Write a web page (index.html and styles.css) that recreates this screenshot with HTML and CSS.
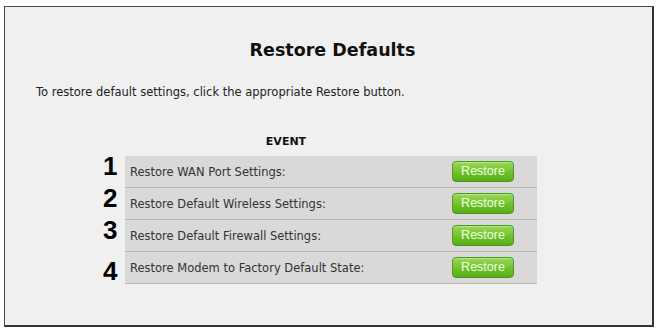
FILE: index.html
```html
<!DOCTYPE html>
<html>
<head>
<meta charset="utf-8">
<link rel="stylesheet" href="styles.css">
</head>
<body>
<div class="frame">
  <h1 class="title">Restore Defaults</h1>
  <p class="intro">To restore default settings, click the appropriate Restore button.</p>
  <div class="events">
    <div class="head">
      <span class="head-label">EVENT</span>
    </div>
    <div class="line">
      <span class="num">1</span>
      <div class="row"><span class="label">Restore WAN Port Settings:</span><span class="cell"><button class="btn">Restore</button></span></div>
    </div>
    <div class="line">
      <span class="num">2</span>
      <div class="row"><span class="label">Restore Default Wireless Settings:</span><span class="cell"><button class="btn">Restore</button></span></div>
    </div>
    <div class="line">
      <span class="num">3</span>
      <div class="row"><span class="label">Restore Default Firewall Settings:</span><span class="cell"><button class="btn">Restore</button></span></div>
    </div>
    <div class="line">
      <span class="num num-low">4</span>
      <div class="row"><span class="label">Restore Modem to Factory Default State:</span><span class="cell"><button class="btn">Restore</button></span></div>
    </div>
  </div>
</div>
</body>
</html>
```

FILE: styles.css
```css
html, body {
  margin: 0;
  padding: 0;
  background: #ffffff;
}
body {
  font-family: "DejaVu Sans", Verdana, sans-serif;
}
.frame {
  box-sizing: border-box;
  margin: 6px 0 0 4px;
  width: 650px;
  height: 321px;
  background: #f0f0f0;
  border: 1px solid #4a4a4a;
  border-right: 2px solid #333;
  border-bottom: 2px solid #333;
  padding-top: 33px;
}
.title {
  margin: 0;
  font-size: 17.5px;
  line-height: 20px;
  font-weight: bold;
  color: #111;
  text-align: center;
  padding-left: 8px;
}
.intro {
  margin: 25px 0 0 31px;
  font-size: 11.5px;
  line-height: 14px;
  color: #222;
}
.events {
  margin: 36px 0 0 97px;
}
.head {
  display: flex;
  padding-left: 23px;
  margin-bottom: 7px;
}
.head-label {
  width: 322px;
  text-align: center;
  font-weight: bold;
  font-size: 11px;
  line-height: 14px;
  color: #111;
}
.line {
  display: flex;
  align-items: flex-start;
}
.num {
  width: 23px;
  font-family: "Liberation Sans", Arial, sans-serif;
  font-weight: bold;
  font-size: 26px;
  line-height: 21px;
  color: #000;
  padding-left: 1px;
  box-sizing: border-box;
}
.num-low {
  margin-top: 9px;
}
.row {
  display: flex;
  align-items: center;
  width: 412px;
  height: 31px;
  background: #d9d9d9;
  border-bottom: 1px solid #b9b9b9;
}
.label {
  width: 322px;
  padding-left: 5px;
  box-sizing: border-box;
  font-size: 11.5px;
  color: #333;
}
.cell {
  display: flex;
  justify-content: center;
  width: 72px;
}
.btn {
  width: 62px;
  height: 21px;
  padding: 0;
  border: 1px solid #4c9a1c;
  border-radius: 4px;
  background: linear-gradient(#9ada55, #6fc12a 55%, #5aad18);
  color: #f2ffe4;
  font-family: "Liberation Sans", Arial, sans-serif;
  font-size: 12.5px;
  line-height: 19px;
  box-shadow: inset 0 1px 0 rgba(255,255,255,0.35);
}
```
